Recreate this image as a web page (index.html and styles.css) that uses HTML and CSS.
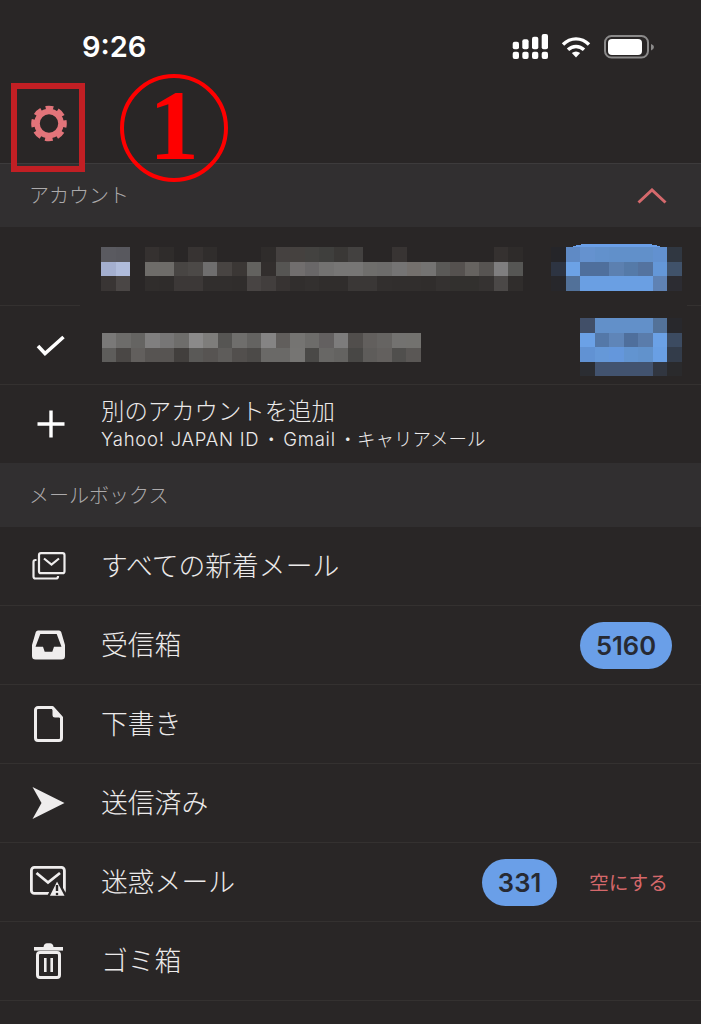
FILE: index.html
```html
<!DOCTYPE html>
<html lang="ja">
<head>
    <meta charset="UTF-8">
    <meta name="viewport" content="width=device-width, initial-scale=1.0">
    <title>メールボックス</title>
    <link rel="stylesheet" href="styles.css">
</head>
<body>

<div class="screen">
    <div class="status-bar">
        <span class="clock">9:26</span>
        <div class="status-icons">
            <svg class="icon-signal" width="36" height="26" viewBox="0 0 36 26" fill="#fff">
                <rect x="0.7" y="7.7" width="6.3" height="7.6" rx="2"/>
                <rect x="10.3" y="5.3" width="6.3" height="10" rx="2"/>
                <rect x="20" y="2.7" width="6.3" height="12.6" rx="2"/>
                <rect x="29.7" y="0" width="6.3" height="15.3" rx="2"/>
                <rect x="0.7" y="17.7" width="6.3" height="7.3" rx="2"/>
                <rect x="10.3" y="17.7" width="6.3" height="7.3" rx="2"/>
                <rect x="20" y="17.7" width="6.3" height="7.3" rx="2"/>
                <rect x="29.7" y="17.7" width="6.3" height="7.3" rx="2"/>
            </svg>
            <svg class="icon-wifi" width="30" height="22" viewBox="0 0 30 22" fill="none" stroke="#fff" stroke-width="3.4">
                <path d="M2 8.5C9.5 1 20.5 1 28 8.5"/>
                <path d="M7 13.8C11.5 9.3 18.5 9.3 23 13.8"/>
                <path d="M10.8 17 Q15 13.8 19.2 17 L15 21.4Z" fill="#fff" stroke="none"/>
            </svg>
            <svg class="icon-battery" width="50" height="24" viewBox="0 0 50 24">
                <rect x="1" y="1" width="43" height="21.5" rx="6.5" fill="none" stroke="#8b8a8a" stroke-width="2"/>
                <rect x="4" y="4" width="34" height="16" rx="4" fill="#fff"/>
                <path d="M47 9 Q50 10 50 12 Q50 14 47 15.5Z" fill="#8b8a8a"/>
            </svg>
        </div>
    </div>

    <div class="toolbar">
        <svg width="36" height="37" viewBox="0 0 36 36" fill="none" stroke="#e2747a">
            <circle cx="18" cy="18" r="12" stroke-width="5.6"/>
            <circle cx="18" cy="18" r="15.6" stroke-width="4.4" stroke-dasharray="7.6 4.65" stroke-dashoffset="3.8"/>
        </svg>
    </div>

    <div class="section-head section-first">
        <span class="section-label">アカウント</span>
        <svg width="30" height="16" viewBox="0 0 30 16" fill="none" stroke="#d5696c" stroke-width="3">
            <path d="M1.5 14.5L15 2L28.5 14.5"/>
        </svg>
    </div>

    <div class="row row-masked">
        <div class="row-icon"></div>
        <svg class="mosaic" width="422" height="44" viewBox="0 0 29 3">
            <rect x="0" y="0" width="1" height="1" fill="#5a5a60"/><rect x="1" y="0" width="1" height="1" fill="#58585e"/>
            <rect x="3" y="0" width="1" height="1" fill="#353130"/><rect x="4" y="0" width="1" height="1" fill="#2f2c2b"/>
            <rect x="6" y="0" width="1" height="1" fill="#373332"/><rect x="7" y="0" width="1" height="1" fill="#302d2c"/>
            <rect x="11" y="0" width="1" height="1" fill="#2f2c2b"/><rect x="12" y="0" width="1" height="1" fill="#454140"/>
            <rect x="13" y="0" width="1" height="1" fill="#45413f"/><rect x="14" y="0" width="1" height="1" fill="#434240"/>
            <rect x="15" y="0" width="1" height="1" fill="#3f3f3d"/><rect x="16" y="0" width="1" height="1" fill="#3a3836"/>
            <rect x="17" y="0" width="1" height="1" fill="#434140"/><rect x="20" y="0" width="1" height="1" fill="#383433"/>
            <rect x="27" y="0" width="1" height="1" fill="#353130"/><rect x="28" y="0" width="1" height="1" fill="#2e2b2a"/>

            <rect x="0" y="1" width="1" height="1" fill="#a4afcf"/><rect x="1" y="1" width="1" height="1" fill="#b0bcdb"/>
            <rect x="3" y="1" width="1" height="1" fill="#6e6c69"/><rect x="4" y="1" width="1" height="1" fill="#6e6c69"/>
            <rect x="5" y="1" width="1" height="1" fill="#484543"/><rect x="6" y="1" width="1" height="1" fill="#4c4947"/>
            <rect x="7" y="1" width="1" height="1" fill="#6f6e6e"/><rect x="8" y="1" width="1" height="1" fill="#484442"/>
            <rect x="9" y="1" width="1" height="1" fill="#3b3735"/><rect x="10" y="1" width="1" height="1" fill="#63625f"/>
            <rect x="11" y="1" width="1" height="1" fill="#322e2d"/><rect x="12" y="1" width="1" height="1" fill="#565553"/>
            <rect x="13" y="1" width="1" height="1" fill="#716e6e"/><rect x="14" y="1" width="1" height="1" fill="#696768"/>
            <rect x="15" y="1" width="1" height="1" fill="#737271"/><rect x="16" y="1" width="1" height="1" fill="#777675"/>
            <rect x="17" y="1" width="1" height="1" fill="#777675"/><rect x="18" y="1" width="1" height="1" fill="#6f6e6c"/>
            <rect x="19" y="1" width="1" height="1" fill="#6d6c6b"/><rect x="20" y="1" width="1" height="1" fill="#757474"/>
            <rect x="21" y="1" width="1" height="1" fill="#74706d"/><rect x="22" y="1" width="1" height="1" fill="#747372"/>
            <rect x="23" y="1" width="1" height="1" fill="#5a5957"/><rect x="24" y="1" width="1" height="1" fill="#55514f"/>
            <rect x="25" y="1" width="1" height="1" fill="#666360"/><rect x="26" y="1" width="1" height="1" fill="#575452"/>
            <rect x="27" y="1" width="1" height="1" fill="#7f7e7f"/><rect x="28" y="1" width="1" height="1" fill="#565654"/>

            <rect x="0" y="2" width="1" height="1" fill="#393534"/><rect x="1" y="2" width="1" height="1" fill="#4a4645"/>
            <rect x="3" y="2" width="1" height="1" fill="#302d2c"/><rect x="4" y="2" width="1" height="1" fill="#2f2c2b"/>
            <rect x="5" y="2" width="1" height="1" fill="#3c3837"/><rect x="6" y="2" width="1" height="1" fill="#3c3837"/>
            <rect x="7" y="2" width="1" height="1" fill="#312e2d"/><rect x="8" y="2" width="1" height="1" fill="#312e2d"/>
            <rect x="9" y="2" width="1" height="1" fill="#302d2c"/><rect x="10" y="2" width="1" height="1" fill="#484443"/>
            <rect x="11" y="2" width="1" height="1" fill="#423e3d"/><rect x="12" y="2" width="1" height="1" fill="#373332"/>
            <rect x="13" y="2" width="1" height="1" fill="#312e2d"/><rect x="14" y="2" width="1" height="1" fill="#33302f"/>
            <rect x="15" y="2" width="1" height="1" fill="#302d2c"/><rect x="16" y="2" width="1" height="1" fill="#302d2c"/>
            <rect x="17" y="2" width="1" height="1" fill="#3a3736"/><rect x="18" y="2" width="1" height="1" fill="#3a3736"/>
            <rect x="19" y="2" width="1" height="1" fill="#322f2e"/><rect x="20" y="2" width="1" height="1" fill="#312e2d"/>
            <rect x="21" y="2" width="1" height="1" fill="#312e2d"/><rect x="22" y="2" width="1" height="1" fill="#302d2c"/>
            <rect x="23" y="2" width="1" height="1" fill="#343130"/><rect x="24" y="2" width="1" height="1" fill="#32302e"/>
            <rect x="25" y="2" width="1" height="1" fill="#32302e"/><rect x="26" y="2" width="1" height="1" fill="#353231"/>
            <rect x="27" y="2" width="1" height="1" fill="#4b4847"/><rect x="28" y="2" width="1" height="1" fill="#302d2c"/>
        </svg>
        <svg class="mosaic mosaic-blue" width="131" height="44" viewBox="0 0 9 3">
            <path d="M1.4 0 Q1.8 -0.2 2.2 -0.2 H6.8 Q7.2 -0.2 7.6 0Z" fill="#6a9fe8"/>
            <rect x="0" y="0" width="1" height="1" fill="#252529"/><rect x="1" y="0" width="1" height="1" fill="#5f8ac5"/>
            <rect x="2" y="0" width="1" height="1" fill="#6592cf"/><rect x="3" y="0" width="1" height="1" fill="#6291cc"/>
            <rect x="4" y="0" width="1" height="1" fill="#6190ca"/><rect x="5" y="0" width="1" height="1" fill="#6190ca"/>
            <rect x="6" y="0" width="1" height="1" fill="#6190ca"/><rect x="7" y="0" width="1" height="1" fill="#6291d0"/>
            <rect x="8" y="0" width="1" height="1" fill="#303741"/>

            <rect x="0" y="1" width="1" height="1" fill="#2d3442"/><rect x="1" y="1" width="1" height="1" fill="#6ca2e6"/>
            <rect x="2" y="1" width="1" height="1" fill="#4f6f9c"/><rect x="3" y="1" width="1" height="1" fill="#4f6f9c"/>
            <rect x="4" y="1" width="1" height="1" fill="#5c80b0"/><rect x="5" y="1" width="1" height="1" fill="#557aa8"/>
            <rect x="6" y="1" width="1" height="1" fill="#54739f"/><rect x="7" y="1" width="1" height="1" fill="#6497d8"/>
            <rect x="8" y="1" width="1" height="1" fill="#40526a"/>

            <rect x="0" y="2" width="1" height="1" fill="#27272b"/><rect x="1" y="2" width="1" height="1" fill="#527199"/>
            <rect x="2" y="2" width="1" height="1" fill="#6a9fe3"/><rect x="3" y="2" width="1" height="1" fill="#6a9fe3"/>
            <rect x="4" y="2" width="1" height="1" fill="#6a9fe3"/><rect x="5" y="2" width="1" height="1" fill="#6a9fe3"/>
            <rect x="6" y="2" width="1" height="1" fill="#6a9fe3"/><rect x="7" y="2" width="1" height="1" fill="#5f82b4"/>
            <rect x="8" y="2" width="1" height="1" fill="#2c2c32"/>
        </svg>
    </div>

    <div class="row">
        <div class="row-icon">
            <svg width="29" height="22" viewBox="0 0 29 22" fill="none" stroke="#fff" stroke-width="3.6">
                <path d="M2 12L9 19.5L27.5 3"/>
            </svg>
        </div>
        <svg class="mosaic" width="320" height="29" viewBox="0 0 22 2">
            <rect x="0" y="0" width="1" height="1" fill="#7a7978"/><rect x="1" y="0" width="1" height="1" fill="#6d6c6a"/>
            <rect x="2" y="0" width="1" height="1" fill="#656462"/><rect x="3" y="0" width="1" height="1" fill="#807f7f"/>
            <rect x="4" y="0" width="1" height="1" fill="#777676"/><rect x="5" y="0" width="1" height="1" fill="#6e6d6b"/>
            <rect x="6" y="0" width="1" height="1" fill="#8b8a8a"/><rect x="7" y="0" width="1" height="1" fill="#7e7d7b"/>
            <rect x="8" y="0" width="1" height="1" fill="#565553"/><rect x="9" y="0" width="1" height="1" fill="#6f6e6c"/>
            <rect x="10" y="0" width="1" height="1" fill="#646361"/><rect x="11" y="0" width="1" height="1" fill="#858484"/>
            <rect x="12" y="0" width="1" height="1" fill="#615e5c"/><rect x="13" y="0" width="1" height="1" fill="#757472"/>
            <rect x="14" y="0" width="1" height="1" fill="#6d6c6a"/><rect x="15" y="0" width="1" height="1" fill="#636060"/>
            <rect x="16" y="0" width="1" height="1" fill="#7d7c7c"/><rect x="17" y="0" width="1" height="1" fill="#514e4c"/>
            <rect x="18" y="0" width="1" height="1" fill="#625f5d"/><rect x="19" y="0" width="1" height="1" fill="#666462"/>
            <rect x="20" y="0" width="1" height="1" fill="#737270"/><rect x="21" y="0" width="1" height="1" fill="#73726f"/>

            <rect x="0" y="1" width="1" height="1" fill="#5e5d5b"/><rect x="1" y="1" width="1" height="1" fill="#4a4745"/>
            <rect x="2" y="1" width="1" height="1" fill="#625f5d"/><rect x="3" y="1" width="1" height="1" fill="#575452"/>
            <rect x="4" y="1" width="1" height="1" fill="#575452"/><rect x="5" y="1" width="1" height="1" fill="#423f3d"/>
            <rect x="6" y="1" width="1" height="1" fill="#5a5957"/><rect x="7" y="1" width="1" height="1" fill="#575452"/>
            <rect x="8" y="1" width="1" height="1" fill="#5e5c5a"/><rect x="9" y="1" width="1" height="1" fill="#524f4d"/>
            <rect x="10" y="1" width="1" height="1" fill="#4c4a48"/><rect x="11" y="1" width="1" height="1" fill="#6a6967"/>
            <rect x="12" y="1" width="1" height="1" fill="#6a6967"/><rect x="13" y="1" width="1" height="1" fill="#767573"/>
            <rect x="14" y="1" width="1" height="1" fill="#4a4947"/><rect x="15" y="1" width="1" height="1" fill="#686765"/>
            <rect x="16" y="1" width="1" height="1" fill="#646361"/><rect x="17" y="1" width="1" height="1" fill="#484745"/>
            <rect x="18" y="1" width="1" height="1" fill="#5e5c5a"/><rect x="19" y="1" width="1" height="1" fill="#63605e"/>
            <rect x="20" y="1" width="1" height="1" fill="#504f4d"/><rect x="21" y="1" width="1" height="1" fill="#5a5755"/>
        </svg>
        <svg class="mosaic mosaic-blue" width="102" height="58" viewBox="0 0 7 4">
            <rect x="0" y="0" width="1" height="1" fill="#414f68"/><rect x="1" y="0" width="1" height="1" fill="#6290c9"/>
            <rect x="2" y="0" width="1" height="1" fill="#6290c9"/><rect x="3" y="0" width="1" height="1" fill="#6290c9"/>
            <rect x="4" y="0" width="1" height="1" fill="#6290c9"/><rect x="5" y="0" width="1" height="1" fill="#537299"/>
            <rect x="6" y="0" width="1" height="1" fill="#28282c"/>

            <rect x="0" y="1" width="1" height="1" fill="#6ba1e6"/><rect x="1" y="1" width="1" height="1" fill="#5478a8"/>
            <rect x="2" y="1" width="1" height="1" fill="#5f85b8"/><rect x="3" y="1" width="1" height="1" fill="#4f6f9c"/>
            <rect x="4" y="1" width="1" height="1" fill="#5a7cab"/><rect x="5" y="1" width="1" height="1" fill="#6ba1e6"/>
            <rect x="6" y="1" width="1" height="1" fill="#3c4b61"/>

            <rect x="0" y="2" width="1" height="1" fill="#6192d3"/><rect x="1" y="2" width="1" height="1" fill="#6598d8"/>
            <rect x="2" y="2" width="1" height="1" fill="#6497dc"/><rect x="3" y="2" width="1" height="1" fill="#6294d0"/>
            <rect x="4" y="2" width="1" height="1" fill="#6192cc"/><rect x="5" y="2" width="1" height="1" fill="#699fe4"/>
            <rect x="6" y="2" width="1" height="1" fill="#333c4a"/>

            <rect x="0" y="3" width="1" height="1" fill="#2b2d32"/><rect x="1" y="3" width="1" height="1" fill="#42536f"/>
            <rect x="2" y="3" width="1" height="1" fill="#42536f"/><rect x="3" y="3" width="1" height="1" fill="#42536f"/>
            <rect x="4" y="3" width="1" height="1" fill="#42536f"/><rect x="5" y="3" width="1" height="1" fill="#313640"/>
            <rect x="6" y="3" width="1" height="1" fill="#2a2a2c"/>
        </svg>
    </div>

    <div class="row row-add">
        <div class="row-icon">
            <svg width="28" height="28" viewBox="0 0 28 28" fill="none" stroke="#fff" stroke-width="3.4">
                <path d="M0.5 14H27.5M14 0.5V27.5"/>
            </svg>
        </div>
        <div class="add-text">
            <div class="add-title">別のアカウントを追加</div>
            <div class="add-sub"><span class="latin">Yahoo! JAPAN ID</span> ・ <span class="latin">Gmail</span> ・キャリアメール</div>
        </div>
    </div>

    <div class="section-head">
        <span class="section-label">メールボックス</span>
    </div>

    <div class="row box-row">
        <div class="row-icon">
            <svg width="34" height="28" viewBox="0 0 34 28" fill="none" stroke="#efeded" stroke-width="2.2">
                <rect x="7" y="1.2" width="25.5" height="20" rx="2"/>
                <path d="M12 6.5L19.5 12.5L27 6.5"/>
                <path d="M4.5 8H3.5A2 2 0 0 0 1.5 10V24.5A2 2 0 0 0 3.5 26.5H24A2 2 0 0 0 26 24.5V24"/>
            </svg>
        </div>
        <span class="box-name">すべての新着メール</span>
    </div>

    <div class="row box-row">
        <div class="row-icon">
            <svg width="33" height="30" viewBox="0 0 33 30" fill="#efeded">
                <path fill-rule="evenodd" d="M6 0.5H27Q28.6 0.5 29.2 2L33 15V26Q33 29.5 29.5 29.5H3.5Q0 29.5 0 26V15L3.8 2Q4.4 0.5 6 0.5ZM8.3 4L3.5 16.7H11L12.7 21.7H20.3L22 16.7H29.5L24.7 4Z"/>
            </svg>
        </div>
        <span class="box-name">受信箱</span>
        <span class="badge badge-inbox">5160</span>
    </div>

    <div class="row box-row">
        <div class="row-icon">
            <svg width="29" height="36" viewBox="0 0 29 36" fill="none" stroke="#efeded" stroke-width="3">
                <path d="M4 1.5H18.5L27.5 11.5V32A2.5 2.5 0 0 1 25 34.5H4A2.5 2.5 0 0 1 1.5 32V4A2.5 2.5 0 0 1 4 1.5Z" stroke-linejoin="round"/>
                <path d="M18.5 1.5L27.5 11.5H21A2.5 2.5 0 0 1 18.5 9Z" fill="#efeded" stroke="none"/>
            </svg>
        </div>
        <span class="box-name">下書き</span>
    </div>

    <div class="row box-row">
        <div class="row-icon">
            <svg width="33" height="32" viewBox="0 0 33 32" fill="#efeded">
                <path d="M0.5 0L32.5 16L0.5 32L9.5 16Z"/>
            </svg>
        </div>
        <span class="box-name">送信済み</span>
    </div>

    <div class="row box-row">
        <div class="row-icon">
            <svg width="37" height="32" viewBox="0 0 37 32" fill="none" stroke="#efeded" stroke-width="2.8">
                <rect x="1.4" y="1.4" width="33" height="26" rx="3"/>
                <path d="M6.5 7L18 16.5L30 7"/>
                <path d="M27 13L18 31H36.5Z" fill="#efeded" stroke="#292626" stroke-width="2.4" stroke-linejoin="round"/>
                <path d="M27 19V25" stroke="#292626" stroke-width="2.4"/>
                <circle cx="27" cy="28" r="1.3" fill="#292626" stroke="none"/>
            </svg>
        </div>
        <span class="box-name">迷惑メール</span>
        <span class="badge badge-spam">331</span>
        <span class="empty-link">空にする</span>
    </div>

    <div class="row box-row">
        <div class="row-icon">
            <svg width="29" height="36" viewBox="0 0 29 36" fill="#efeded">
                <path d="M9.5 4Q10 0.3 13 0.3H16Q19 0.3 19.5 4Z"/>
                <rect x="0" y="4" width="29" height="3.6"/>
                <rect x="3.5" y="9.5" width="22" height="25" rx="2.5" fill="none" stroke="#efeded" stroke-width="3"/>
                <rect x="10" y="15" width="2.6" height="14"/>
                <rect x="16.4" y="15" width="2.6" height="14"/>
            </svg>
        </div>
        <span class="box-name">ゴミ箱</span>
    </div>

    <!-- red marks added on top of the screenshot -->
    <div class="mark-box"></div>
    <div class="mark-circle">1</div>
</div>

</body>
</html>
```

FILE: styles.css
```css
html, body {
    margin: 0;
    padding: 0;
}
body {
    background-color: #292626;
    font-family: Inter, "Noto Sans CJK JP", sans-serif;
    color: #eceaea;
}
.screen {
    position: relative;
    height: 1024px;
    overflow: hidden;
}
.status-bar {
    display: flex;
    justify-content: space-between;
    align-items: center;
    height: 93px;
    padding: 0 47px 0 82px;
    box-sizing: border-box;
}
.clock {
    font-size: 29px;
    font-weight: 600;
    color: #fff;
}
.status-icons {
    display: flex;
    align-items: center;
    gap: 13px;
}
.toolbar {
    display: flex;
    align-items: center;
    height: 70px;
    padding-left: 31px;
    padding-bottom: 10px;
    box-sizing: border-box;
}
.section-head {
    display: flex;
    justify-content: space-between;
    align-items: center;
    height: 64px;
    padding: 0 34px 0 29px;
    box-sizing: border-box;
    background-color: #312f30;
    font-size: 20px;
    font-weight: 300;
    color: #acaaab;
}
.section-first {
    border-top: 1px solid #3d3b3c;
}
.section-label {
    margin-bottom: 2px;
}
.row {
    display: flex;
    align-items: center;
    height: 79px;
    padding-right: 19px;
    box-sizing: border-box;
    border-bottom: 1px solid #343130;
}
.row-masked {
    border-bottom: none;
    background: linear-gradient(to right, #343130 80px, transparent 80px, transparent 687px, #343130 687px) bottom / 100% 1px no-repeat;
}
.row-add {
    height: 78px;
    border-bottom: none;
}
.row-icon {
    flex: none;
    display: flex;
    justify-content: center;
    width: 101px;
}
.box-row .row-icon {
    width: 97px;
    margin-right: 4px;
}
.mosaic {
    flex: none;
    margin-top: 4px;
    overflow: visible;
    shape-rendering: crispEdges;
}
.mosaic-blue {
    margin-left: auto;
}
.add-text {
    display: flex;
    flex-direction: column;
    font-weight: 300;
}
.add-title {
    font-size: 23.4px;
    line-height: 30px;
}
.add-sub {
    font-size: 18.5px;
    line-height: 24px;
    word-spacing: -2.5px;
}
.latin {
    letter-spacing: 0.75px;
    word-spacing: 0;
}
.box-name {
    margin-bottom: 3px;
    font-size: 26.8px;
    font-weight: 300;
}
.badge {
    display: flex;
    justify-content: center;
    align-items: center;
    height: 47px;
    border-radius: 24px;
    background-color: #6a9fe8;
    color: #272a33;
    font-size: 25.6px;
    font-weight: 600;
}
.badge-inbox {
    width: 92px;
    margin-left: auto;
    margin-right: 10px;
}
.badge-spam {
    width: 75px;
    margin-left: auto;
}
.empty-link {
    margin-left: 32px;
    margin-right: 14px;
    margin-bottom: 2px;
    font-size: 19.7px;
    font-weight: 400;
    color: #d5686b;
}
.mark-box {
    position: absolute;
    left: 11px;
    top: 83px;
    width: 74px;
    height: 89px;
    box-sizing: border-box;
    border: 6px solid #c11f24;
}
.mark-circle {
    position: absolute;
    left: 120px;
    top: 74px;
    width: 108px;
    height: 108px;
    padding-bottom: 5px;
    box-sizing: border-box;
    border: 4.5px solid #fe0000;
    border-radius: 50%;
    display: flex;
    justify-content: center;
    align-items: center;
    font-family: "Liberation Serif", serif;
    font-size: 100px;
    font-weight: bold;
    line-height: 1;
    color: #fe0000;
}
```
